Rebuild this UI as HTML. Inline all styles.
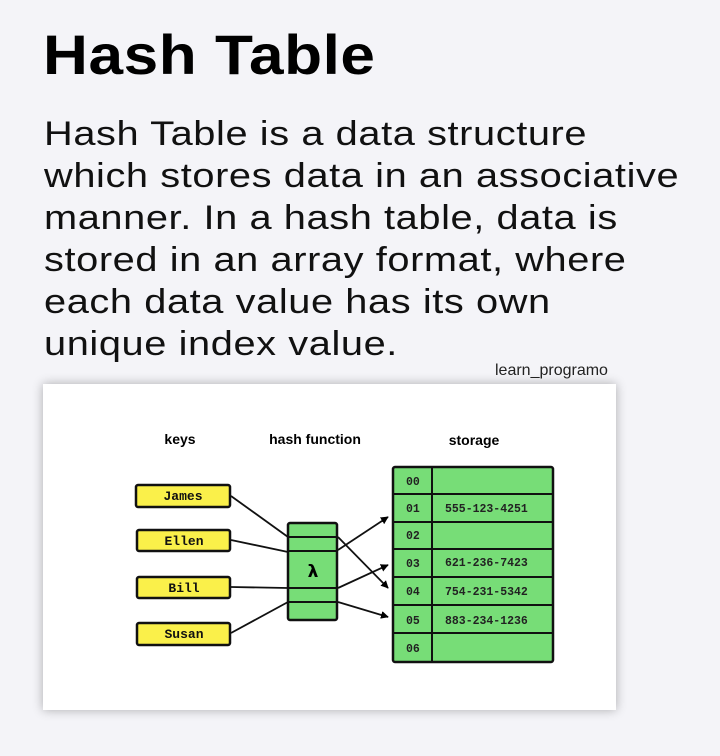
<!DOCTYPE html>
<html><head><meta charset="utf-8"><style>
body{margin:0;width:720px;height:756px;background:#f4f4f8;font-family:"Liberation Sans",sans-serif;position:relative;overflow:hidden}
h1{position:absolute;left:43px;top:22px;margin:0;font-size:56px;font-weight:bold;color:#000;letter-spacing:0.5px;transform:scaleX(1.11);transform-origin:left top;white-space:nowrap}
.p{position:absolute;left:44px;top:113px;font-size:34px;line-height:42px;color:#111;letter-spacing:0.5px;transform:scaleX(1.17);transform-origin:left top;white-space:nowrap}
.wm{position:absolute;left:495px;top:362px;font-size:16px;color:#222}
.panel{position:absolute;left:43px;top:384px;width:573px;height:326px;background:#fff;box-shadow:0 0 10px rgba(0,0,0,0.3)}
</style></head><body>
<h1>Hash Table</h1>
<div class="p">Hash Table is a data structure<br>which stores data in an associative<br>manner. In a hash table, data is<br>stored in an array format, where<br>each data value has its own<br>unique index value.</div>
<div class="wm">learn_programo</div>
<div class="panel"></div>
<svg style="position:absolute;left:0;top:0" width="720" height="756" font-family="Liberation Mono, monospace">
<defs><marker id="a" markerWidth="8" markerHeight="8" refX="7" refY="4" orient="auto" markerUnits="userSpaceOnUse"><path d="M0,0 L8,4 L0,8 Z" fill="#000" transform="scale(1.3) translate(-2,-1)"/></marker></defs>
<g font-family="Liberation Sans, sans-serif" font-weight="bold" font-size="14" text-anchor="middle">
<text x="180" y="444">keys</text><text x="315" y="444">hash function</text><text x="474" y="445">storage</text></g>
<g fill="#faf04a" stroke="#111" stroke-width="2.5">
<rect x="136" y="485" width="94" height="22" rx="2"/><rect x="137" y="530" width="93" height="21" rx="2"/>
<rect x="137" y="577" width="93" height="21" rx="2"/><rect x="137" y="623" width="93" height="22" rx="2"/></g>
<g font-size="13" font-weight="bold" text-anchor="middle" fill="#111">
<text x="183" y="500">James</text><text x="184" y="545">Ellen</text><text x="184" y="592">Bill</text><text x="184" y="638">Susan</text></g>
<g stroke="#111" stroke-width="1.8" fill="none">
<line x1="231" y1="496" x2="288" y2="537"/><line x1="231" y1="540" x2="288" y2="552"/>
<line x1="231" y1="587" x2="288" y2="588"/><line x1="231" y1="633" x2="288" y2="602"/>
<line x1="338" y1="550" x2="388" y2="517" marker-end="url(#a)"/>
<line x1="338" y1="537" x2="388" y2="588" marker-end="url(#a)"/>
<line x1="338" y1="588" x2="388" y2="565" marker-end="url(#a)"/>
<line x1="338" y1="602" x2="388" y2="617" marker-end="url(#a)"/>
</g>
<rect x="288" y="523" width="49" height="97" rx="2" fill="#77dd77" stroke="#111" stroke-width="2.5"/>
<g stroke="#111" stroke-width="2"><line x1="288" y1="537" x2="337" y2="537"/><line x1="288" y1="551" x2="337" y2="551"/><line x1="288" y1="588" x2="337" y2="588"/><line x1="288" y1="602" x2="337" y2="602"/></g>
<text x="313" y="577" font-size="17" font-weight="bold" text-anchor="middle" font-family="DejaVu Sans, sans-serif">λ</text>
<rect x="393" y="467" width="160" height="195" rx="2" fill="#77dd77" stroke="#111" stroke-width="2.5"/>
<g stroke="#111" stroke-width="2"><line x1="432" y1="467" x2="432" y2="662"/>
<line x1="393" y1="494" x2="553" y2="494"/><line x1="393" y1="522" x2="553" y2="522"/><line x1="393" y1="549" x2="553" y2="549"/><line x1="393" y1="577" x2="553" y2="577"/><line x1="393" y1="605" x2="553" y2="605"/><line x1="393" y1="633" x2="553" y2="633"/></g>
<g font-size="11.5" font-weight="bold" fill="#222">
<text x="406" y="485">00</text><text x="406" y="512">01</text><text x="406" y="539">02</text><text x="406" y="567">03</text><text x="406" y="595">04</text><text x="406" y="624">05</text><text x="406" y="652">06</text>
<text x="445" y="512">555-123-4251</text><text x="445" y="566">621-236-7423</text><text x="445" y="595">754-231-5342</text><text x="445" y="624">883-234-1236</text></g>
</svg>
</body></html>
